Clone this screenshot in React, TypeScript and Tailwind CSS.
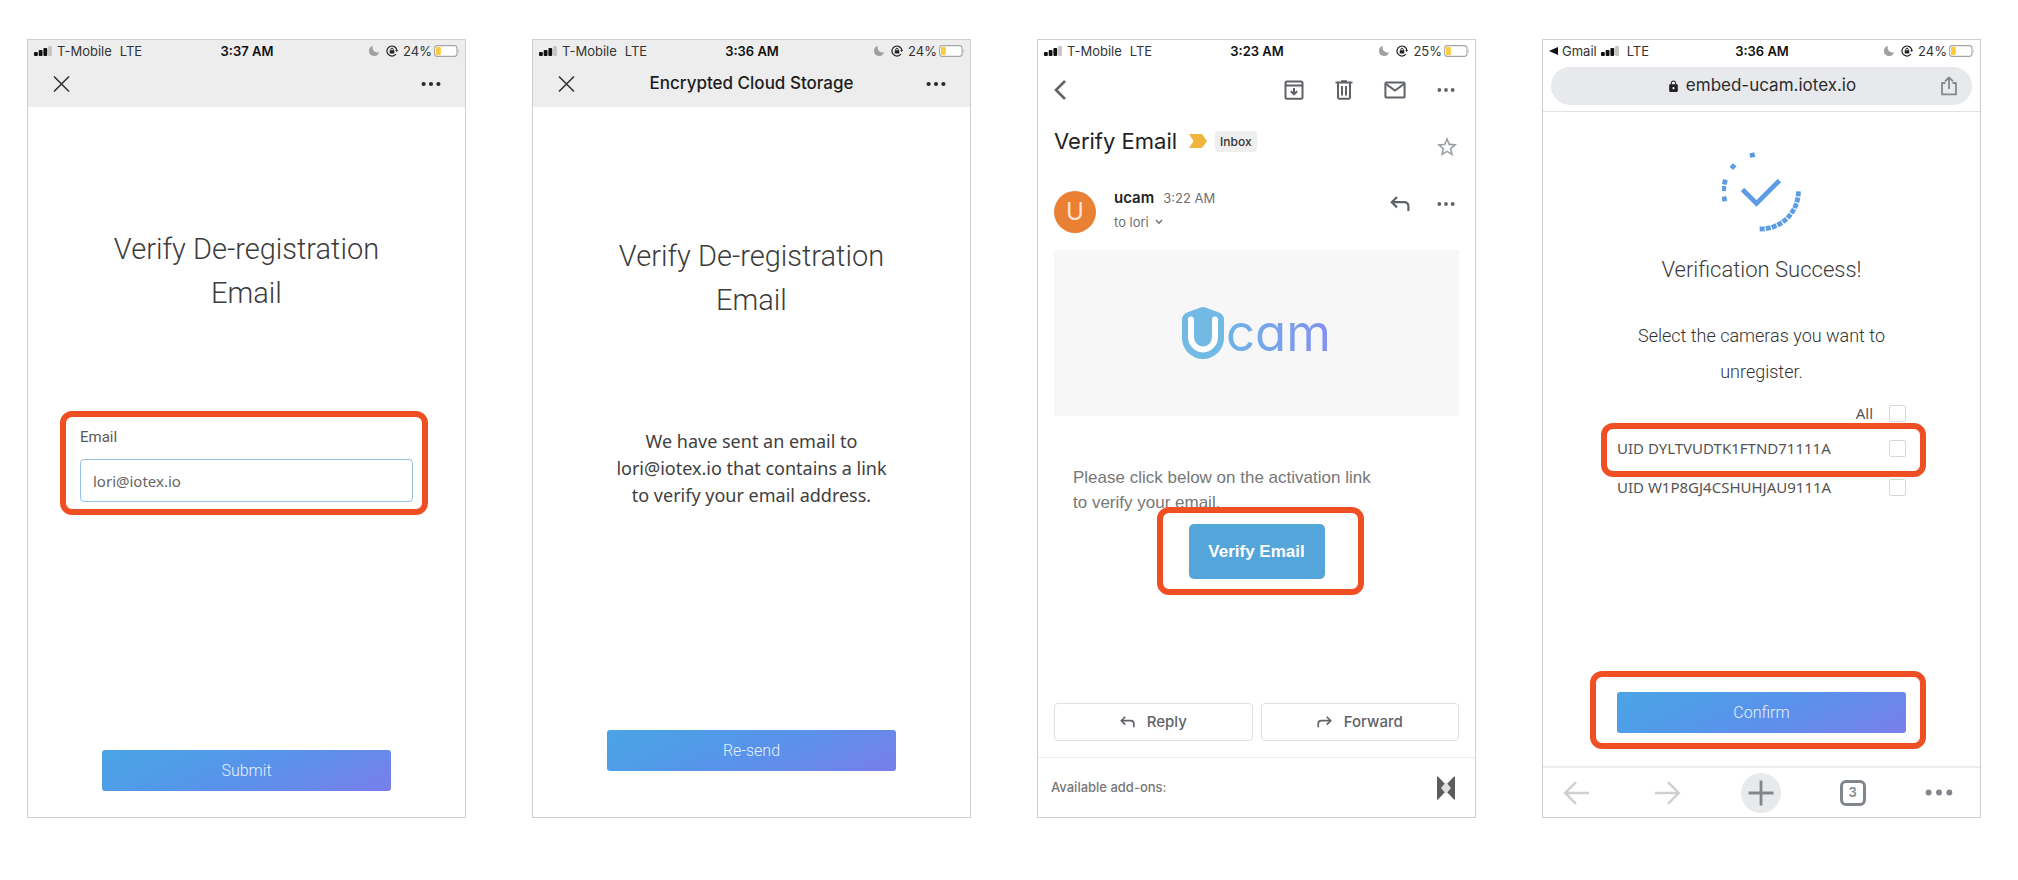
import type { ReactNode } from "react"
import { MdLock, MdStarBorder } from "react-icons/md"

const Signal = () => (
    <svg viewBox="0 0 18 10" className="h-[10px] w-[18px]" aria-hidden="true">
        <rect x="0" y="6" width="3.8" height="4" rx="1" fill="#111" />
        <rect x="4.7" y="4" width="3.8" height="6" rx="1" fill="#111" />
        <rect x="9.4" y="2" width="3.8" height="8" rx="1" fill="#111" />
        <rect x="14.1" y="0" width="3.8" height="10" rx="1" fill="#c4c4c4" />
    </svg>
)

const Moon = () => (
    <svg viewBox="0 0 11 11" className="h-[11px] w-[11px]" aria-hidden="true">
        <path d="M4 1.1 A5 5 0 1 0 9.9 7 A4.5 4.5 0 0 1 4 1.1Z" fill="#a0a0a0" />
    </svg>
)

const RotationLock = () => (
    <svg viewBox="0 0 12 12" className="h-3 w-3" fill="none" stroke="#222" aria-hidden="true">
        <path d="M10 9 A5 5 0 1 1 10.9 5.2" strokeWidth="1.2" />
        <path d="M9.2 4.9 H12 L10.7 6.9Z" fill="#222" stroke="none" />
        <rect x="3.7" y="5.2" width="4.6" height="3.4" rx="0.4" fill="#222" stroke="none" />
        <path d="M4.8 5.4 V4.4 A1.2 1.2 0 0 1 7.2 4.4 V5.4" strokeWidth="1" />
    </svg>
)

const Battery = () => (
    <svg viewBox="0 0 26 12" className="h-3 w-[26px]" aria-hidden="true">
        <rect x="0.6" y="0.6" width="22.4" height="10.8" rx="2.6" fill="#fff" stroke="#a6a6a6" strokeWidth="1.1" />
        <rect x="2" y="2" width="4.8" height="8" rx="1" fill="#fbcb3c" />
        <path d="M24.2 4 Q25.6 6 24.2 8Z" fill="#a6a6a6" />
    </svg>
)

const StatusBar = ({ time, battery, fromApp }: { time: string; battery: string; fromApp?: string }) => (
    <div className="grid h-[21px] grid-cols-[1fr_auto_1fr] items-center pr-[5px] pl-[6px] text-[13px] leading-4 text-[#333]">
        {fromApp ? (
            <div className="flex items-center gap-1">
                <svg viewBox="0 0 9 8" className="h-2 w-[9px]" aria-hidden="true"><path d="M0 4 L9 0 V8Z" fill="#111" /></svg>
                <span>{fromApp}</span>
                <Signal />
                <span className="ml-1">LTE</span>
            </div>
        ) : (
            <div className="flex items-center gap-[5px]">
                <Signal />
                <span>T-Mobile</span>
                <span className="ml-[3px]">LTE</span>
            </div>
        )}
        <div className="font-semibold text-[#111]">{time}</div>
        <div className="flex items-center justify-end">
            <Moon />
            <span className="mr-[5px] ml-[6px]"><RotationLock /></span>
            <span className="mr-[2px]">{battery}</span>
            <Battery />
        </div>
    </div>
)

const Dots = ({ className }: { className: string }) => (
    <svg viewBox="0 0 20 6" className={className} fill="currentColor" aria-hidden="true">
        <circle cx="2.6" cy="3" r="2.1" />
        <circle cx="10" cy="3" r="2.1" />
        <circle cx="17.4" cy="3" r="2.1" />
    </svg>
)

const ReplyArrow = ({ className }: { className: string }) => (
    <svg viewBox="0 0 20 16" className={className} fill="none" stroke="currentColor" strokeWidth="2.2" aria-hidden="true">
        <path d="M7 1 L1.8 6.2 L7 11.4" />
        <path d="M2 6.2 H14 Q18.4 6.2 18.4 10.6 V15" />
    </svg>
)

// red frame drawn around the step the user has to look at
const Highlight = ({ className }: { className: string }) => (
    <div className={`pointer-events-none absolute rounded-xl border-[6px] border-[#f04e23] ${className}`} />
)

const Phone = ({ children }: { children: ReactNode }) => (
    <section className="flex min-h-[779px] flex-col border border-[#cfcfcf] bg-white">{children}</section>
)

const TopBar = ({ title, time }: { title?: string; time: string }) => (
    <header className="bg-[#ededed]">
        <StatusBar time={time} battery="24%" />
        <div className="grid h-[46px] grid-cols-[1fr_auto_1fr] items-center px-6">
            <button aria-label="Close" className="w-5">
                <svg viewBox="0 0 20 20" className="h-5 w-5" fill="none" stroke="#333" strokeWidth="1.6" aria-hidden="true">
                    <path d="M2 2.5 L17 17.5 M17 2.5 L2 17.5" />
                </svg>
            </button>
            <h1 className="text-[17px] font-medium text-[#1c1c1c]">{title}</h1>
            <button aria-label="More" className="justify-self-end text-[#2b2b2b]"><Dots className="h-[6px] w-5" /></button>
        </div>
    </header>
)

const GradientButton = ({ children }: { children: ReactNode }) => (
    <button className="h-[41px] w-full rounded-[3px] bg-[linear-gradient(155deg,#4ba4e4_0%,#4f9de8_25%,#5b91eb_55%,#6a88ea_78%,#7a7eec_100%)] font-[Roboto,sans-serif] text-base font-light text-[#e6f0fc]">
        {children}
    </button>
)

const VerifyTitle = () => (
    <h2 className="mx-auto max-w-[300px] text-center font-[Roboto,sans-serif] text-[29px] leading-[44px] font-light text-[#3c3c3c]">
        Verify De-registration Email
    </h2>
)

const EmailScreen = () => (
    <Phone>
        <TopBar time="3:37 AM" />
        <div className="flex flex-1 flex-col pt-[120px]">
            <VerifyTitle />
            <div className="relative mx-[52px] mt-28">
                <label htmlFor="email" className="mb-3 block font-[Roboto,sans-serif] text-[15px] leading-5 text-[#5a5a5a]">Email</label>
                <input
                    id="email"
                    type="email"
                    defaultValue="lori@iotex.io"
                    className="h-[43px] w-full rounded border border-[#95c1e8] px-3 font-['Noto_Sans',sans-serif] text-[15px] text-[#666] outline-none"
                />
                <Highlight className="-top-4 -right-[15px] -bottom-[13px] -left-5" />
            </div>
            <div className="mx-[74px] mt-auto mb-[26px]"><GradientButton>Submit</GradientButton></div>
        </div>
    </Phone>
)

const SentScreen = () => (
    <Phone>
        <TopBar title="Encrypted Cloud Storage" time="3:36 AM" />
        <div className="flex flex-1 flex-col pt-[127px]">
            <VerifyTitle />
            <p className="mx-auto mt-[106px] max-w-[280px] text-center font-['Noto_Sans',sans-serif] text-[18px] leading-[27px] text-[#404040]">
                We have sent an email to lori@iotex.io that contains a link to verify your email address.
            </p>
            <div className="mx-[74px] mt-auto mb-[46px]"><GradientButton>Re-send</GradientButton></div>
        </div>
    </Phone>
)

const UcamLogo = () => (
    <div className="flex items-center gap-[2px]">
        <svg viewBox="0 0 42 52" className="h-[52px] w-[42px]" aria-hidden="true">
            <path d="M18.5 0.6 Q21 -0.4 23.5 0.6 L37 5.6 Q42 8 42 13 V31 A21 21 0 0 1 0 31 V13 Q0 8 5 5.6Z" fill="#72bae4" />
            <path d="M9 12.5 V30 A12 12.4 0 0 0 33 30 V12.5" fill="none" stroke="#fff" strokeWidth="6" strokeLinecap="round" />
        </svg>
        <span className="bg-gradient-to-r from-[#6db3e6] to-[#8290f0] bg-clip-text font-[Inter,sans-serif] text-[51px] leading-[52px] font-normal text-transparent [font-feature-settings:'cv11']">cam</span>
    </div>
)

const InboxScreen = () => (
    <Phone>
        <StatusBar time="3:23 AM" battery="25%" />
        <div className="flex h-14 items-center justify-between pt-[2px] pr-5 pl-4 text-[#5f6368]">
            <button aria-label="Back">
                <svg viewBox="0 0 12 20" className="h-5 w-3" fill="none" stroke="currentColor" strokeWidth="2.6" aria-hidden="true"><path d="M11 1 L2 10 L11 19" /></svg>
            </button>
            <div className="flex items-center">
                <button aria-label="Archive">
                    <svg viewBox="0 0 20 20" className="h-5 w-5" fill="none" stroke="currentColor" strokeWidth="2" aria-hidden="true">
                        <path d="M1.5 3 Q1.5 1.4 3 1.4 H17 Q18.5 1.4 18.5 3 V17.5 Q18.5 18.8 17.2 18.8 H2.8 Q1.5 18.8 1.5 17.5Z M1.5 5.4 H18.5" strokeLinejoin="round" />
                        <path d="M10 8 V14 M6.8 11.2 L10 14.4 L13.2 11.2" />
                    </svg>
                </button>
                <button aria-label="Delete" className="ml-[31px]">
                    <svg viewBox="0 0 18 20" className="h-5 w-[18px]" fill="none" stroke="currentColor" strokeWidth="2" aria-hidden="true">
                        <path d="M0.5 2.4 H17.5 M6 1.2 H12 M3 3 V17.4 Q3 18.8 4.4 18.8 H13.6 Q15 18.8 15 17.4 V3 M7 6 V15.5 M11 6 V15.5" />
                    </svg>
                </button>
                <button aria-label="Mark unread" className="ml-[31px]">
                    <svg viewBox="0 0 22 18" className="h-[18px] w-[22px]" fill="none" stroke="currentColor" strokeWidth="2" aria-hidden="true">
                        <rect x="1.4" y="1.4" width="19.2" height="15.2" rx="1.2" />
                        <path d="M2 3 L11 9.6 L20 3" />
                    </svg>
                </button>
                <button aria-label="More" className="ml-[31px]"><Dots className="h-[6px] w-[18px]" /></button>
            </div>
        </div>

        <div className="flex h-12 items-center px-4">
            <h1 className="text-[22px] text-[#222]">Verify Email</h1>
            <svg viewBox="0 0 18 14" className="ml-3 h-[14px] w-[18px]" aria-hidden="true"><path d="M0 0 H12 Q13 0 13.6 0.8 L18 7 L13.6 13.2 Q13 14 12 14 H0 L4.6 7Z" fill="#f0b53c" /></svg>
            <span className="ml-2 rounded bg-[#eee] px-[5px] text-xs leading-[21px] font-medium text-[#333]">Inbox</span>
            <button aria-label="Star" className="mt-3 ml-auto text-2xl text-[#9aa0a6]"><MdStarBorder /></button>
        </div>

        <div className="mt-[21px] flex items-start px-4">
            <div className="mt-[5px] flex h-[42px] w-[42px] items-center justify-center rounded-full bg-[#ea8034] text-2xl text-[#fbe5d5]">U</div>
            <div className="ml-[18px] text-[13px] leading-6 text-[#6f6f6f]">
                <div><span className="mr-[9px] text-[15px] font-semibold text-[#222]">ucam</span>3:22 AM</div>
                <div className="flex items-center gap-[6px]">
                    to lori
                    <svg viewBox="0 0 8 6" className="h-[6px] w-2" fill="none" stroke="currentColor" strokeWidth="1.4" aria-hidden="true"><path d="M1 1 L4 4.2 L7 1" /></svg>
                </div>
            </div>
            <div className="mt-[10px] ml-auto flex items-center gap-[27px] pr-1 text-[#5f6368]">
                <button aria-label="Reply"><ReplyArrow className="h-4 w-5" /></button>
                <button aria-label="Message options"><Dots className="h-[6px] w-[18px]" /></button>
            </div>
        </div>

        <div className="mx-4 mt-4 flex h-[166px] items-center justify-center bg-[#f7f7f7]"><UcamLogo /></div>

        <p className="mx-auto mt-[49px] w-full max-w-[407px] pr-[80px] pl-5 font-['Liberation_Sans',sans-serif] text-[17px] leading-[25px] text-[#777]">
            Please click below on the activation link to verify your email.
        </p>
        <div className="relative mx-auto mt-[9px]">
            <a href="#verify" className="flex h-[55px] w-[136px] items-center justify-center rounded-[5px] bg-[#54a6da] font-['Liberation_Sans',sans-serif] text-[17px] font-bold text-white">Verify Email</a>
            <Highlight className="-top-[17px] -right-[39px] -bottom-4 -left-8" />
        </div>

        <div className="mx-4 mt-auto mb-4 grid grid-cols-2 gap-2 text-[15px] font-medium text-[#5f6368]">
            <button className="flex h-[38px] items-center justify-center gap-3 rounded border border-[#e0e1e5]">
                <ReplyArrow className="h-3 w-[15px]" />Reply
            </button>
            <button className="flex h-[38px] items-center justify-center gap-3 rounded border border-[#e0e1e5]">
                <ReplyArrow className="h-3 w-[15px] -scale-x-100" />Forward
            </button>
        </div>
        <footer className="flex h-[60px] items-center justify-between border-t border-[#ececec] pr-5 pl-[13px] text-[13px] font-medium text-[#777]">
            Available add-ons:
            <svg viewBox="0 0 18 24" className="h-6 w-[18px]" aria-hidden="true">
                <path d="M0 1 Q0 0 1 0.6 L9 9 L17 0.6 Q18 0 18 1 V23 Q18 24 17 23.4 L9 15 L1 23.4 Q0 24 0 23Z" fill="#5c5c5c" />
                <path d="M9 6 L14 12 L9 18 L4 12Z" fill="#dedede" />
            </svg>
        </footer>
    </Phone>
)

const leftTicks = [-104, -139, -166, -176, 168]
const rightTicks = Array.from({ length: 10 }, (_, i) => 3 + i * 9.4)

const SuccessMark = () => (
    <svg viewBox="0 0 80 80" className="mx-auto h-20 w-20" aria-hidden="true">
        {[...leftTicks, ...rightTicks].map((deg) => (
            <rect key={deg} x="74" y="37.4" width="4.8" height="5" fill="#5c9be6" transform={`rotate(${deg} 39 39.5)`} />
        ))}
        <path d="M20.5 37.5 L34.5 51.5 L57.5 28.5" fill="none" stroke="#5c9be6" strokeWidth="4.6" />
    </svg>
)

const cameras = ["DYLTVUDTK1FTND71111A", "W1P8GJ4CSHUHJAU9111A"]
const checkbox = "h-[17px] w-[17px] appearance-none rounded-[2px] border border-[#d9d9d9] bg-white checked:bg-[#5b91eb]"

const CamerasScreen = () => (
    <Phone>
        <header className="border-b border-[#e2e2e2] pb-[6px]">
            <StatusBar time="3:36 AM" battery="24%" fromApp="Gmail" />
            <div className="mx-2 mt-[6px] grid h-[38px] grid-cols-[1fr_auto_1fr] items-center rounded-full bg-[#e8e9ec] px-[14px]">
                <span />
                <div className="flex items-center gap-[6px] text-[17px] text-[#2c2c2e]"><MdLock className="text-[13px] text-[#222]" />embed-ucam.iotex.io</div>
                <button aria-label="Share" className="justify-self-end text-[#85878b]">
                    <svg viewBox="0 0 18 20" className="h-5 w-[18px]" fill="none" stroke="currentColor" strokeWidth="1.8" aria-hidden="true">
                        <path d="M5.5 7 H2 V18.4 H16 V7 H12.5 M9 13 V1.8 M5 5.4 L9 1.4 L13 5.4" strokeLinejoin="round" />
                    </svg>
                </button>
            </div>
        </header>

        <div className="flex flex-1 flex-col pt-10">
            <SuccessMark />
            <h2 className="mt-[23px] text-center font-[Roboto,sans-serif] text-[22px] leading-[30px] font-light text-[#3c3c3c]">Verification Success!</h2>
            <p className="mx-auto mt-[33px] max-w-[260px] text-center font-[Roboto,sans-serif] text-[18px] leading-9 font-light text-[#333]">
                Select the cameras you want to unregister.
            </p>
            <div className="mx-[74px] mt-2 font-['Noto_Sans',sans-serif] text-[15px] text-[#555]">
                <label className="flex h-[31px] items-center justify-end gap-4">All<input type="checkbox" className={checkbox} /></label>
                {cameras.map((uid, i) => (
                    <label key={uid} className="relative flex h-[39px] items-center justify-between">
                        UID {uid}
                        <input type="checkbox" className={checkbox} />
                        {i === 0 && <Highlight className="-top-[6px] -right-5 -bottom-[9px] -left-4" />}
                    </label>
                ))}
            </div>
            <div className="relative mx-[74px] mt-auto mb-[33px]">
                <GradientButton>Confirm</GradientButton>
                <Highlight className="-top-[21px] -right-5 -bottom-4 -left-[27px]" />
            </div>
        </div>

        <nav className="flex h-[51px] items-center justify-between border-t-2 border-[#ededed] pr-[27px] pl-[13px] text-[#80868b]">
            <button aria-label="Previous page" className="flex w-10 justify-center text-[#cfcfcf]">
                <svg viewBox="0 0 26 24" className="h-6 w-[26px]" fill="none" stroke="currentColor" strokeWidth="2.4" aria-hidden="true"><path d="M26 12 H2.5 M13 1.2 L2.2 12 L13 22.8" /></svg>
            </button>
            <button aria-label="Next page" className="flex w-10 justify-center text-[#cfcfcf]">
                <svg viewBox="0 0 26 24" className="h-6 w-[26px]" fill="none" stroke="currentColor" strokeWidth="2.4" aria-hidden="true"><path d="M0 12 H23.5 M13 1.2 L23.8 12 L13 22.8" /></svg>
            </button>
            <button aria-label="New tab" className="flex h-10 w-10 items-center justify-center rounded-full bg-[#e8e9ec]">
                <svg viewBox="0 0 26 26" className="h-[26px] w-[26px]" fill="none" stroke="currentColor" strokeWidth="2.8" aria-hidden="true"><path d="M13 0.5 V25.5 M0.5 13 H25.5" /></svg>
            </button>
            <button aria-label="Open tabs" className="flex w-10 justify-center">
                <span className="flex h-[26px] w-[26px] items-center justify-center rounded-md border-[3px] border-[#80868b] text-[13px] font-semibold">3</span>
            </button>
            <button aria-label="Menu"><Dots className="h-[9px] w-7" /></button>
        </nav>
    </Phone>
)

const App = () => {
    return (
        <main className="grid min-h-screen grid-cols-4 items-start gap-x-[66px] bg-white pt-[39px] pr-[37px] pb-6 pl-[27px] font-[Inter,sans-serif]">
            <EmailScreen />
            <SentScreen />
            <InboxScreen />
            <CamerasScreen />
        </main>
    )
}

export default App
